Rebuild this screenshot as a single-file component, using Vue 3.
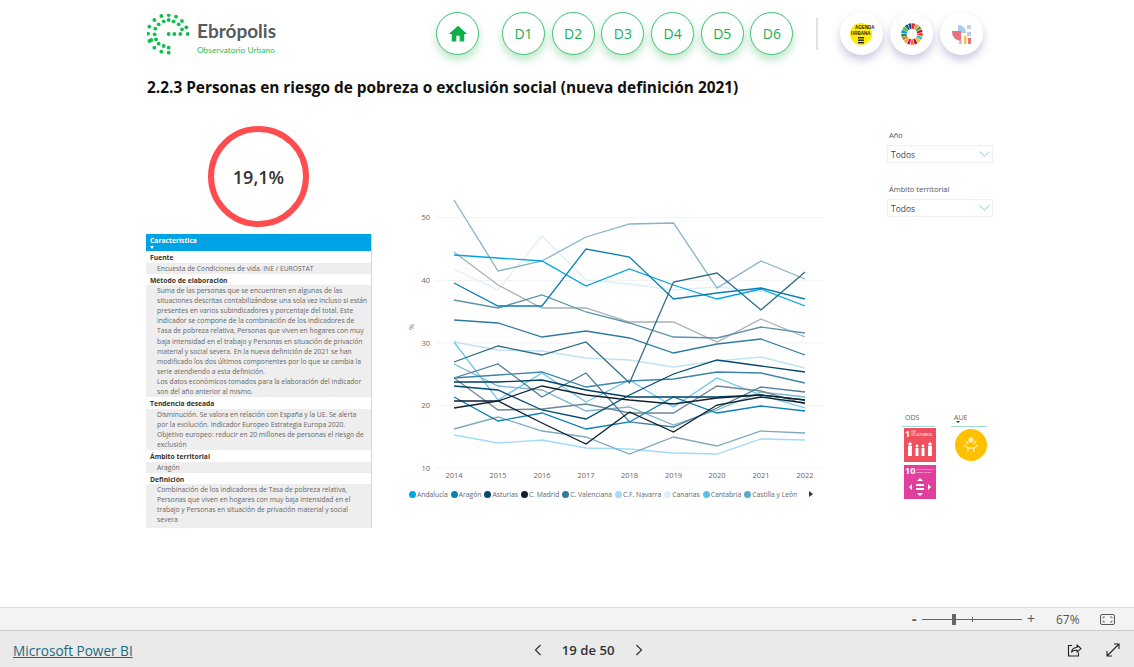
<script setup>
const navItems = ['D1', 'D2', 'D3', 'D4', 'D5', 'D6']
const logoDots = [[115,47],[93,50],[137,52],[72,62],[155,65],[57,82],[168,84],[53,103],[57,125],[72,145],[93,157],[115,160],[115,62],[100,66],[130,66],[85,75],[145,75],[75,88],[155,90],[73,105],[115,104],[132,104],[150,104],[172,104],[63,122],[77,120],[85,133],[100,140],[115,145]]
  .map(([x, y]) => [(x - 50) / 3, (y - 44) / 3])
const years = [2014, 2015, 2016, 2017, 2018, 2019, 2020, 2021, 2022]
const xs = [454, 498, 542, 586, 629.5, 673.5, 717, 761, 805]
const gridRows = [[50, 217.5], [40, 280.5], [30, 343], [20, 405.5], [10, 468]]
const series = [
  ['#deeef7', [269, 290, 236, 280, 284, 290, 287, 291, 305]],
  ['#bfe3f5', [342, 350, 351, 358, 360, 367, 361, 357, 368]],
  ['#9fdcf7', [435, 443, 440, 448, 449, 453, 454, 439, 440]],
  ['#7fa9bf', [429, 417, 431, 437, 454, 437, 446, 431, 433]],
  ['#86b3c9', [200, 271, 261, 237, 224, 223, 288, 261, 279]],
  ['#a9b0b5', [252, 285, 308, 308, 322, 322, 342, 319, 337]],
  ['#5e93ad', [300, 308, 295, 312, 323, 337, 338, 327, 333]],
  ['#2f7ba0', [320, 323, 337, 331, 338, 353, 344, 339, 355]],
  ['#7fb4cc', [364, 386, 390, 411, 407, 425, 410, 392, 397]],
  ['#6cc5ee', [342, 400, 373, 402, 380, 407, 378, 395, 408]],
  ['#6f8894', [378, 410, 409, 404, 413, 413, 386, 391, 404]],
  ['#4b7e96', [378, 364, 397, 373, 422, 427, 408, 387, 392]],
  ['#3a85a8', [378, 375, 372, 387, 381, 379, 372, 373, 383]],
  ['#0a7fb5', [397, 421, 413, 429, 422, 397, 413, 406, 411]],
  ['#01a5e6', [255, 258, 261, 286, 269, 285, 299, 289, 306]],
  ['#0b7fb2', [283, 306, 306, 249, 257, 299, 293, 288, 299]],
  ['#2e6b85', [362, 346, 355, 342, 383, 282, 273, 310, 272]],
  ['#004a6e', [386, 390, 410, 419, 395, 374, 360, 366, 372]],
  ['#003f5f', [382, 382, 380, 390, 397, 397, 397, 395, 400]],
  ['#14242e', [408, 401, 386, 395, 400, 404, 398, 395, 400]],
  ['#0c2030', [401, 401, 423, 444, 412, 432, 405, 397, 403]]
].map(([color, ys]) => ({ color, points: ys.map((y, i) => `${xs[i]},${y}`).join(' ') }))
const legend = [
  ['Andalucía', '#01a5e6'], ['Aragón', '#0b7fb2'], ['Asturias', '#004a6e'], ['C. Madrid', '#0c2030'],
  ['C. Valenciana', '#2f7ba0'], ['C.F. Navarra', '#9fdcf7'], ['Canarias', '#deeef7'],
  ['Cantabria', '#5cc0ee'], ['Castilla y León', '#5fa8c8']
]
const table = [
  { head: 'Fuente', lines: ['Encuesta de Condiciones de vida. INE / EUROSTAT'] },
  { head: 'Método de elaboración', lines: [
    'Suma de las personas que se encuentren en algunas de las',
    'situaciones descritas contabilizándose una sola vez incluso si están',
    'presentes en varios subindicadores y porcentaje del total. Este',
    'indicador se compone de la combinación de los indicadores de',
    'Tasa de pobreza relativa, Personas que viven en hogares con muy',
    'baja intensidad en el trabajo y Personas en situación de privación',
    'material y social severa. En la nueva definición de 2021 se han',
    'modificado los dos últimos componentes por lo que se cambia la',
    'serie atendiendo a esta definición.',
    'Los datos económicos tomados para la elaboración del indicador',
    'son del año anterior al mismo.'
  ] },
  { head: 'Tendencia deseada', lines: [
    'Disminución. Se valora en relación con España y la UE. Se alerta',
    'por la evolución. Indicador Europeo Estrategia Europa 2020.',
    'Objetivo europeo: reducir en 20 millones de personas el riesgo de',
    'exclusión'
  ] },
  { head: 'Ámbito territorial', lines: ['Aragón'] },
  { head: 'Definición', lines: [
    'Combinación de los indicadores de Tasa de pobreza relativa,',
    'Personas que viven en hogares con muy baja intensidad en el',
    'trabajo y Personas en situación de privación material y social',
    'severa'
  ] }
]
const filters = ['Año', 'Ámbito territorial']
const wheelColors = ['#e5243b','#dda63a','#4c9f38','#c5192d','#ff3a21','#26bde2','#fcc30b','#a21942','#fd6925','#dd1367','#fd9d24','#bf8b2e','#3f7e44','#0a97d9','#56c02b','#00689d','#19486a']
const wheel = wheelColors.map((color, i) => ({ color, rot: (i * 360) / 17 - 90 }))
const wheelDash = `${(2 * Math.PI * 8) / 17 - 0.5} ${(2 * Math.PI * 8) * 16 / 17 + 0.5}`
</script>

<template>
  <div class="page">
    <div class="report">
      <header class="top">
        <div class="logo">
          <svg class="logo-mark" width="44" height="42" viewBox="0 0 44 42">
            <circle v-for="(d, i) in logoDots" :key="i" :cx="d[0]" :cy="d[1]" r="1.9" fill="#12bd4e" />
          </svg>
          <div class="logo-text">
            <div class="logo-name">Ebrópolis</div>
            <div class="logo-sub">Observatorio Urbano</div>
          </div>
        </div>
        <nav class="nav">
          <div class="btn home">
            <svg width="20" height="20" viewBox="0 0 24 24"><path d="M10 21v-7h4v7h5.5v-9H23L12 2 1 12h3.5v9z" fill="#0eb049" /></svg>
          </div>
          <div class="dims">
            <div v-for="n in navItems" :key="n" class="btn">{{ n }}</div>
          </div>
          <div class="divider"></div>
          <div class="extras">
            <div class="btn soft">
              <svg width="26" height="24" viewBox="0 0 26 24">
                <circle cx="12" cy="12" r="11" fill="#ffec00" />
                <text x="6" y="7" class="agenda-a">AGENDA</text>
                <text x="2" y="13" class="agenda-a">URBANA</text>
                <rect x="9" y="15" width="6" height="1.4" fill="#222" />
                <rect x="9" y="17.5" width="6" height="1.4" fill="#222" />
                <rect x="9" y="20" width="6" height="1.4" fill="#222" />
              </svg>
            </div>
            <div class="btn soft">
              <svg width="24" height="24" viewBox="0 0 24 24">
                <circle v-for="w in wheel" :key="w.color" cx="12" cy="12" r="8" fill="none" :stroke="w.color" stroke-width="5.5" :stroke-dasharray="wheelDash" :transform="`rotate(${w.rot} 12 12)`" />
              </svg>
            </div>
            <div class="btn soft">
              <svg width="22" height="24" viewBox="0 0 22 24">
                <path d="M7 3a8 8 0 0 1 8 8h-8z" fill="#a9cdf0" />
                <path d="M1 9h9v10a9 9 0 0 1-9-9z" fill="#e8737c" />
                <rect x="16" y="3" width="4" height="4" fill="#c3d4ee" />
                <rect x="16" y="10" width="4" height="4" fill="#b9c9e8" />
                <rect x="13" y="14" width="2.5" height="8" fill="#f4c64b" />
                <rect x="17" y="16" width="3" height="6" fill="#e8737c" />
                <rect x="8" y="19" width="3" height="3" fill="#a9cdf0" />
              </svg>
            </div>
          </div>
        </nav>
      </header>

      <h1 class="title">2.2.3 Personas en riesgo de pobreza o exclusión social (nueva definición 2021)</h1>

      <main class="main">
        <section class="left">
          <div class="ring">19,1%</div>
          <div class="table">
            <div class="thead">
              <span>Característica</span>
              <i class="caret"></i>
            </div>
            <div v-for="row in table" :key="row.head" class="group">
              <div class="ghead">{{ row.head }}</div>
              <div class="gbody">
                <div v-for="l in row.lines" :key="l" class="line">{{ l }}</div>
              </div>
            </div>
          </div>
        </section>

        <section class="chart">
          <svg width="430" height="290" viewBox="400 190 430 290">
            <g v-for="g in gridRows" :key="g[0]">
              <line x1="436" x2="822" :y1="g[1]" :y2="g[1]" stroke="#f3f3f3" stroke-width="1" />
              <text x="430" :y="g[1] + 2.5" text-anchor="end" class="tick">{{ g[0] }}</text>
            </g>
            <text x="0" y="0" class="tick" text-anchor="middle" transform="translate(414 327) rotate(-90)">%</text>
            <text v-for="(y, i) in years" :key="y" :x="xs[i]" y="478" text-anchor="middle" class="tick">{{ y }}</text>
            <polyline v-for="(s, i) in series" :key="i" :points="s.points" fill="none" :stroke="s.color" stroke-width="1.3" stroke-linejoin="miter" />
          </svg>
          <div class="legend">
            <div v-for="l in legend" :key="l[0]" class="leg">
              <i class="dot" :style="{ background: l[1] }"></i>{{ l[0] }}
            </div>
            <i class="leg-next"></i>
          </div>
        </section>

        <aside class="right">
          <div v-for="f in filters" :key="f" class="filter">
            <div class="flabel">{{ f }}</div>
            <div class="select">
              <span>Todos</span>
              <svg width="11" height="6" viewBox="0 0 11 6"><path d="M.5.5 5.500 5l5-4.500" fill="none" stroke="#8fc4df" stroke-width="1" /></svg>
            </div>
          </div>
          <div class="tags">
            <div class="tag-col ods">
              <div class="tag-head">ODS</div>
              <div class="sdg red">
                <div class="sdg-top"><b>1</b><span>FIN<br />DE LA POBREZA</span></div>
                <svg width="28" height="16" viewBox="0 0 28 16" class="sdg-ic">
                  <g fill="#fff">
                    <circle cx="4" cy="3" r="1.7" /><rect x="2" y="5" width="4" height="10" />
                    <circle cx="11" cy="5" r="1.4" /><rect x="9.500" y="7" width="3" height="8" />
                    <circle cx="17" cy="5" r="1.4" /><rect x="15.500" y="7" width="3" height="8" />
                    <circle cx="24" cy="3" r="1.7" /><rect x="22" y="5" width="4" height="10" />
                  </g>
                </svg>
              </div>
              <div class="sdg pink">
                <div class="sdg-top"><b>10</b><span>REDUCCIÓN DE LAS<br />DESIGUALDADES</span></div>
                <svg width="22" height="18" viewBox="0 0 22 18" class="sdg-ic">
                  <g fill="#fff">
                    <path d="M11 0l3 3H8zM11 18l-3-3h6zM0 9l3-3v6zM22 9l-3 3V6z" />
                    <rect x="7" y="6" width="8" height="2" /><rect x="7" y="10" width="8" height="2" />
                  </g>
                </svg>
              </div>
            </div>
            <div class="tag-col aue">
              <div class="tag-head">AUE<i class="tag-caret"></i></div>
              <div class="aue-badge">
                <svg width="20" height="20" viewBox="0 0 20 20">
                  <g fill="none" stroke="#ffe9a6" stroke-width="1.4">
                    <circle cx="10" cy="5" r="2" fill="#ffe9a6" />
                    <path d="M3 10l4 3v4M17 10l-4 3v4M7 13h6M5 6l2 3M15 6l-2 3" />
                  </g>
                </svg>
              </div>
            </div>
          </div>
        </aside>
      </main>
    </div>

    <div class="zoombar">
      <span class="z-minus">-</span>
      <div class="slider"><i class="thumb"></i><i class="mark"></i></div>
      <span class="z-plus">+</span>
      <span class="z-val">67%</span>
      <svg class="z-fit" width="15" height="11" viewBox="0 0 15 11">
        <rect x=".5" y=".5" width="14" height="10" rx="1.500" fill="none" stroke="#555" />
        <path d="M3 4.500V3h2M12 4.500V3h-2M3 6.500V8h2M12 6.500V8h-2" fill="none" stroke="#555" stroke-width=".8" />
      </svg>
    </div>

    <footer class="footer">
      <a class="brand">Microsoft Power BI</a>
      <div class="pager">
        <svg width="8" height="12" viewBox="0 0 8 12"><path d="M6.500 1 1.500 6l5 5" fill="none" stroke="#333" stroke-width="1.200" /></svg>
        <span>19 de 50</span>
        <svg width="8" height="12" viewBox="0 0 8 12"><path d="M1.500 1l5 5-5 5" fill="none" stroke="#333" stroke-width="1.200" /></svg>
      </div>
      <div class="actions">
        <svg width="15" height="14" viewBox="0 0 15 14">
          <path d="M5 2.500H1.500v10.500h10V9.500" fill="none" stroke="#222" stroke-width="1.100" />
          <path d="M4.500 9c.5-3 3-4.500 5.500-4.500V2l4 3.700-4 3.500V7C8 7 6 7.500 4.500 9z" fill="none" stroke="#222" stroke-width="1.100" stroke-linejoin="round" />
        </svg>
        <svg width="14" height="14" viewBox="0 0 14 14">
          <path d="M1 13 13 1M8 1h5v5M1 8v5h5" fill="none" stroke="#222" stroke-width="1.100" />
        </svg>
      </div>
    </footer>
  </div>
</template>

<style scoped>
.page {
  width: 1134px;
  height: 667px;
  display: flex;
  flex-direction: column;
  overflow: hidden;
  background: #fff;
  font-family: "Open Sans", "Noto Sans", sans-serif;
  color: #333;
}
.report { height: 607px; overflow: hidden; padding-left: 146px; box-sizing: border-box; }
.top { display: flex; height: 74px; padding-top: 12px; box-sizing: border-box; }
.logo { display: flex; width: 290px; padding-top: 2px; }
.logo-mark { margin-left: 1px; }
.logo-text { margin-left: 6px; padding-top: 6px; }
.logo-name { font: 700 19px/22px "Lato", sans-serif; color: #555b5e; white-space: nowrap; }
.logo-sub { font: 400 8.400px/11px "Lato", sans-serif; color: #1fbf58; white-space: nowrap; margin-top: 3px; }
.nav { display: flex; align-items: flex-start; }
.btn {
  width: 43px;
  height: 43px;
  border-radius: 50%;
  box-sizing: border-box;
  border: 1px solid #3fc46f;
  background: #fff;
  box-shadow: 0 5px 8px rgba(20, 160, 70, .28);
  display: flex;
  align-items: center;
  justify-content: center;
  color: #17b04f;
  font-size: 14px;
  flex: none;
}
.dims { display: flex; gap: 6.700px; margin-left: 23px; }
.divider { width: 2px; height: 32px; background: #e2e2e2; margin: 6px 22px 0 23px; }
.extras { display: flex; gap: 7px; }
.soft { border: 0; box-shadow: 0 5px 8px rgba(80, 80, 150, .3); }
.agenda-a { font: 700 4.500px "Liberation Sans", sans-serif; fill: #222; }
.title {
  margin: 4px 0 0 1px;
  font-size: 15.400px;
  line-height: 20px;
  font-weight: 700;
  color: #111;
  white-space: nowrap;
}
.main { display: flex; height: 480px; }
.left { width: 226px; flex: none; padding-top: 28px; }
.ring {
  width: 101px;
  height: 101px;
  margin-left: 62px;
  box-sizing: border-box;
  border: 6px solid #ff4d4f;
  border-radius: 50%;
  display: flex;
  align-items: center;
  justify-content: center;
  font-size: 18px;
  font-weight: 600;
  color: #333;
}
.table {
  margin-top: 7px;
  height: 294px;
  overflow: hidden;
  border-right: 1px solid #b5e0ee;
  font-size: 6.750px;
  line-height: 10.100px;
  color: #666;
}
.thead {
  height: 17px;
  background: #00a2e6;
  color: #fff;
  font-weight: 700;
  padding: 2px 0 0 4px;
  box-sizing: border-box;
  position: relative;
}
.thead span { display: block; }
.caret {
  position: absolute;
  left: 4px;
  top: 12px;
  border: 2.500px solid transparent;
  border-top: 3px solid #fff;
  border-bottom: 0;
}
.ghead { font-weight: 700; color: #333; padding: 2px 0 0 4px; height: 11.500px; box-sizing: border-box; }
.gbody { background: #eee; padding: 1px 0 0 11px; }
.group:last-child .gbody { padding-bottom: 4px; }
.line { white-space: nowrap; }
.chart { width: 430px; flex: none; margin-left: 28px; padding-top: 92px; }
.chart svg { display: block; }
.tick { font-size: 7.500px; fill: #666; }
.legend { display: flex; align-items: center; height: 14px; margin-top: 7px; font-size: 6.750px; color: #666; white-space: nowrap; padding-left: 9px; gap: 3px; }
.leg { display: flex; align-items: center; gap: 1px; }
.dot { width: 7px; height: 7px; border-radius: 50%; display: block; }
.leg-next { border: 3px solid transparent; border-left: 4px solid #333; border-right: 0; margin-left: 9px; }
.right { width: 106px; flex: none; margin-left: 57px; padding-top: 32px; }
.filter { margin-bottom: 21px; }
.flabel { font-size: 7.500px; line-height: 11px; color: #555; padding-left: 2px; }
.select {
  height: 18px;
  margin-top: 4px;
  border: 1px solid #f0f0f0;
  box-sizing: border-box;
  display: flex;
  align-items: center;
  justify-content: space-between;
  padding: 0 2px 0 3px;
  font-size: 8.500px;
  color: #444;
}
.tags { display: flex; margin-top: 196px; padding-left: 15px; }
.tag-col { display: flex; flex-direction: column; }
.ods { width: 33px; }
.aue { width: 36px; margin-left: 16px; }
.tag-head { font-size: 7px; line-height: 9px; height: 14px; box-sizing: border-box; color: #666; border-bottom: 1px solid #9fd8d8; padding-left: 3px; position: relative; }
.tag-caret { position: absolute; left: 5px; top: 8px; border: 2px solid transparent; border-top: 2.500px solid #333; border-bottom: 0; }
.sdg { width: 32px; height: 34px; margin: 1px 0 2px 2px; color: #fff; box-sizing: border-box; padding: 1px 1px; overflow: hidden; display: flex; flex-direction: column; align-items: center; }
.red { background: #f04f5d; }
.pink { background: #e0409c; }
.sdg-top { display: flex; align-self: flex-start; align-items: center; gap: 1px; font-size: 2.800px; line-height: 3px; white-space: nowrap; }
.pink .sdg-top { font-size: 1.900px; }
.sdg-top b { font-size: 9px; line-height: 9px; font-weight: 700; }
.sdg-ic { margin-top: 3px; }
.aue-badge { width: 32px; height: 32px; border-radius: 50%; background: #ffc000; margin: 2px 0 0 4px; display: flex; align-items: center; justify-content: center; }
.zoombar {
  height: 24px;
  flex: none;
  box-sizing: border-box;
  background: #f3f3f3;
  border-top: 1px solid #ddd;
  border-bottom: 1px solid #ccc;
  display: flex;
  align-items: center;
  padding-left: 912px;
  color: #555;
}
.z-minus { width: 10px; font-size: 14px; font-weight: 700; line-height: 14px; }
.slider { width: 100px; height: 1px; background: #666; position: relative; }
.thumb { position: absolute; left: 30px; top: -5px; width: 4px; height: 11px; background: #666; }
.mark { position: absolute; left: 50px; top: -2px; width: 1px; height: 5px; background: #666; }
.z-plus { font-size: 14px; margin-left: 5px; width: 14px; line-height: 14px; }
.z-val { font-size: 12px; margin-left: 15px; width: 44px; }
.footer {
  flex: 1;
  background: #eaeaea;
  display: flex;
  align-items: center;
  position: relative;
  padding: 2px 14px 0 13px;
  box-sizing: border-box;
}
.brand { font-size: 13.600px; color: #1a6a80; text-decoration: underline; }
.pager { display: flex; align-items: center; gap: 20px; margin-left: 401px; font-size: 13.200px; font-weight: 600; color: #333; }
.actions { display: flex; gap: 24px; margin-left: auto; }
</style>
